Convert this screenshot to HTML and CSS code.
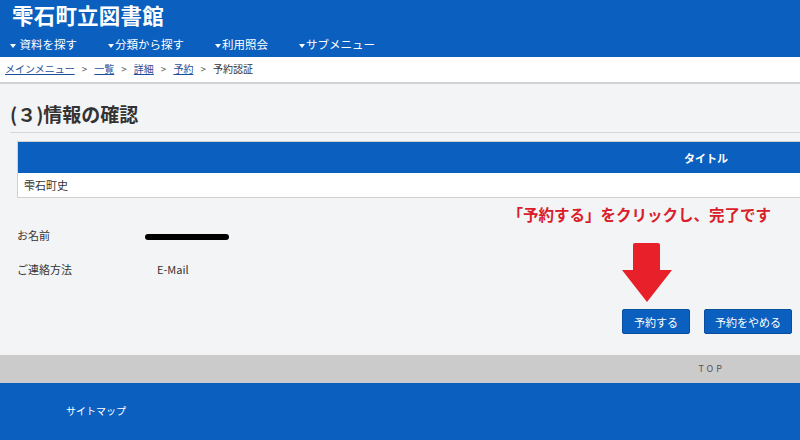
FILE: index.html
```html
<!DOCTYPE html>
<html lang="ja">
<head>
<meta charset="utf-8">
<title>雫石町立図書館</title>
<link rel="stylesheet" href="styles.css">
</head>
<body>
<header class="site-header">
  <div class="site-title">雫石町立図書館</div>
  <nav class="gnav">
    <span class="gnav-item"><span class="caret"></span> 資料を探す</span>
    <span class="gnav-item"><span class="caret"></span>分類から探す</span>
    <span class="gnav-item"><span class="caret"></span>利用照会</span>
    <span class="gnav-item"><span class="caret"></span>サブメニュー</span>
  </nav>
</header>
<div class="breadcrumb">
  <a href="#">メインメニュー</a><span class="sep">&gt;</span><a href="#">一覧</a><span class="sep">&gt;</span><a href="#">詳細</a><span class="sep">&gt;</span><a href="#">予約</a><span class="sep">&gt;</span><span class="current">予約認証</span>
</div>
<main class="content">
  <h1 class="page-title">(３)情報の確認</h1>
  <div class="result-table">
    <div class="result-head"><span class="head-cell">タイトル</span></div>
    <div class="result-row">雫石町史</div>
  </div>
  <div class="note">「予約する」をクリックし、完了です</div>
  <div class="info-row"><span class="info-label">お名前</span><span class="info-value"><span class="redact"></span></span></div>
  <div class="info-row second"><span class="info-label">ご連絡方法</span><span class="info-value">E-Mail</span></div>
  <div class="actions">
    <button class="btn btn-reserve">予約する</button>
    <button class="btn btn-cancel">予約をやめる</button>
  </div>
  <svg class="arrow" width="50" height="60" viewBox="0 0 50 60" aria-hidden="true">
    <path d="M13 0 H36 Q38 0 38 2 V27 H50 L25 59 L0 27 H11 V2 Q11 0 13 0 Z" fill="#e8202a"/>
  </svg>
</main>
<div class="to-top"><span>TOP</span></div>
<footer class="site-footer">
  <span class="footer-link">サイトマップ</span>
</footer>
</body>
</html>
```

FILE: styles.css
```css
html, body {
  margin: 0;
  padding: 0;
}
body {
  background: #f3f4f6;
  font-family: "Noto Sans CJK JP", "Noto Sans", sans-serif;
  font-size: 11px;
  color: #333;
  overflow: hidden;
  width: 800px;
  height: 440px;
}
.site-header {
  background: #0b60bf;
  height: 57px;
  color: #fff;
  overflow: hidden;
}
.site-title {
  font-size: 21.5px;
  font-weight: 700;
  line-height: 24px;
  padding: 3px 0 0 12px;
  letter-spacing: 0.2px;
}
.gnav {
  display: flex;
  gap: 31px;
  padding-left: 10px;
  margin-top: 10px;
  font-size: 11.5px;
  line-height: 14px;
}
.gnav-item {
  display: flex;
  align-items: center;
  white-space: pre;
}
.caret {
  display: inline-block;
  width: 0;
  height: 0;
  border-left: 3.5px solid transparent;
  border-right: 3.5px solid transparent;
  border-top: 4px solid #fff;
  margin-top: 4px;
  margin-right: 1px;
}
.breadcrumb {
  background: #fff;
  height: 25px;
  line-height: 24px;
  border-bottom: 2px solid #d2d2d2;
  padding-left: 5px;
  font-size: 10px;
  color: #333;
}
.breadcrumb a {
  color: #1f4f9a;
  text-decoration: underline;
}
.breadcrumb .sep {
  margin: 0 7px;
  color: #555;
}
.content {
  position: relative;
  padding: 18px 0 0 10px;
}
.page-title {
  margin: 0;
  font-size: 19px;
  line-height: 24px;
  font-weight: 700;
  color: #333;
  padding-bottom: 6px;
  border-bottom: 1px solid #d8d8d8;
}
.result-table {
  margin: 8px -20px 0 7px;
  border: 1px solid #d0d0d0;
  background: #fff;
}
.result-head {
  background: #0b60bf;
  height: 31px;
  display: flex;
  align-items: center;
  justify-content: flex-end;
  padding-right: 91px;
}
.head-cell {
  color: #fff;
  font-weight: 700;
  font-size: 11px;
}
.result-row {
  height: 24px;
  line-height: 24px;
  padding-left: 6px;
  font-size: 11px;
  color: #333;
}
.note {
  margin-top: 5px;
  display: flex;
  justify-content: flex-end;
  padding-right: 29px;
  color: #d9202a;
  font-weight: 700;
  font-size: 15.5px;
  line-height: 22px;
}
.info-row {
  display: flex;
  margin-top: 2px;
  padding-left: 7px;
  line-height: 16px;
  font-size: 11px;
  color: #333;
}
.info-row.second {
  margin-top: 18px;
}
.info-label {
  width: 140px;
}
.redact {
  display: inline-block;
  width: 84px;
  height: 6px;
  border-radius: 3px;
  background: #000;
  margin-left: -12px;
  vertical-align: middle;
}
.actions {
  display: flex;
  justify-content: flex-end;
  gap: 14px;
  padding-right: 8px;
  margin-top: 32px;
}
.btn {
  box-sizing: border-box;
  height: 25px;
  padding: 0;
  background: #0b60bf;
  border: 1px solid #0a4f9e;
  border-radius: 2px;
  color: #fff;
  font-family: inherit;
  font-size: 11px;
  line-height: 22px;
  white-space: nowrap;
  text-align: center;
}
.btn-reserve {
  width: 68px;
}
.btn-cancel {
  width: 88px;
}
.arrow {
  position: absolute;
  left: 622px;
  top: 159px;
}
.to-top {
  margin-top: 21px;
  background: #cbcbcb;
  height: 28px;
  display: flex;
  align-items: center;
  justify-content: flex-end;
  padding-right: 75px;
  font-size: 9px;
  letter-spacing: 3px;
  color: #555;
  line-height: 24px;
}
.site-footer {
  background: #0b60bf;
  height: 60px;
  padding: 21px 0 0 66px;
  box-sizing: border-box;
  color: #fff;
  font-size: 10px;
  line-height: 14px;
}
```
